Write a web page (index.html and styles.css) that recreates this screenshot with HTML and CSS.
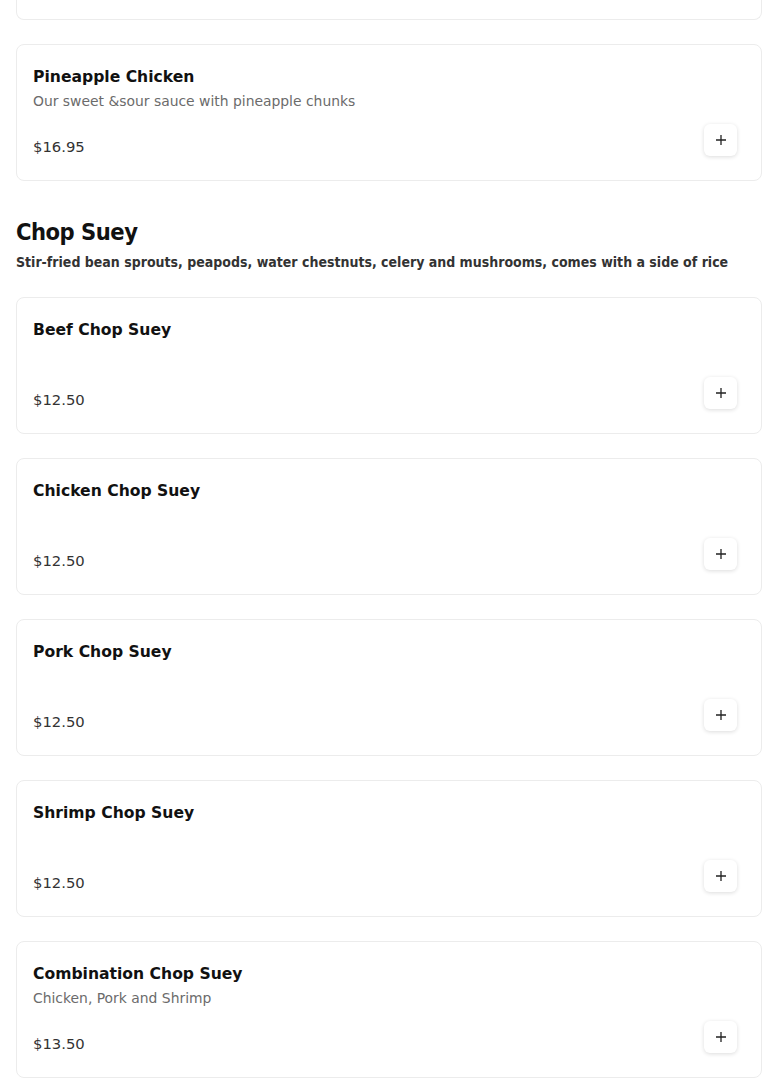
FILE: index.html
```html
<!DOCTYPE html>
<html>
<head>
<meta charset="utf-8">
<link rel="stylesheet" href="styles.css">
</head>
<body>
<main class="menu">
  <div class="card card-partial"></div>

  <div class="card">
    <div class="card-info">
      <h3 class="item-name">Pineapple Chicken</h3>
      <p class="item-desc">Our sweet &amp;sour sauce with pineapple chunks</p>
    </div>
    <div class="card-foot">
      <span class="price">$16.95</span>
      <button class="add-btn" aria-label="Add"><svg width="12" height="12" viewBox="0 0 12 12"><path d="M6 1v10M1 6h10" stroke="#222" stroke-width="1.3" fill="none"/></svg></button>
    </div>
  </div>

  <section class="section">
    <h2 class="section-title">Chop Suey</h2>
    <p class="section-sub">Stir-fried bean sprouts, peapods, water chestnuts, celery and mushrooms, comes with a side of rice</p>
  </section>

  <div class="card">
    <div class="card-info">
      <h3 class="item-name">Beef Chop Suey</h3>
    </div>
    <div class="card-foot">
      <span class="price">$12.50</span>
      <button class="add-btn" aria-label="Add"><svg width="12" height="12" viewBox="0 0 12 12"><path d="M6 1v10M1 6h10" stroke="#222" stroke-width="1.3" fill="none"/></svg></button>
    </div>
  </div>

  <div class="card">
    <div class="card-info">
      <h3 class="item-name">Chicken Chop Suey</h3>
    </div>
    <div class="card-foot">
      <span class="price">$12.50</span>
      <button class="add-btn" aria-label="Add"><svg width="12" height="12" viewBox="0 0 12 12"><path d="M6 1v10M1 6h10" stroke="#222" stroke-width="1.3" fill="none"/></svg></button>
    </div>
  </div>

  <div class="card">
    <div class="card-info">
      <h3 class="item-name">Pork Chop Suey</h3>
    </div>
    <div class="card-foot">
      <span class="price">$12.50</span>
      <button class="add-btn" aria-label="Add"><svg width="12" height="12" viewBox="0 0 12 12"><path d="M6 1v10M1 6h10" stroke="#222" stroke-width="1.3" fill="none"/></svg></button>
    </div>
  </div>

  <div class="card">
    <div class="card-info">
      <h3 class="item-name">Shrimp Chop Suey</h3>
    </div>
    <div class="card-foot">
      <span class="price">$12.50</span>
      <button class="add-btn" aria-label="Add"><svg width="12" height="12" viewBox="0 0 12 12"><path d="M6 1v10M1 6h10" stroke="#222" stroke-width="1.3" fill="none"/></svg></button>
    </div>
  </div>

  <div class="card">
    <div class="card-info">
      <h3 class="item-name">Combination Chop Suey</h3>
      <p class="item-desc">Chicken, Pork and Shrimp</p>
    </div>
    <div class="card-foot">
      <span class="price">$13.50</span>
      <button class="add-btn" aria-label="Add"><svg width="12" height="12" viewBox="0 0 12 12"><path d="M6 1v10M1 6h10" stroke="#222" stroke-width="1.3" fill="none"/></svg></button>
    </div>
  </div>
</main>
</body>
</html>
```
FILE: styles.css
```css
* { box-sizing: border-box; }
html, body { margin: 0; padding: 0; background: #fff; }
body {
  font-family: "DejaVu Sans", "Noto Sans", sans-serif;
  color: #1a1a1a;
  overflow: hidden;
}
.menu {
  display: flex;
  flex-direction: column;
  gap: 24px;
  padding: 0 16px;
}
.card {
  height: 137px;
  border: 1px solid #ececec;
  border-radius: 8px;
  background: #fff;
  padding: 20px 24px 24px 16px;
  display: flex;
  flex-direction: column;
  justify-content: space-between;
}
.card-partial {
  height: 20px;
  border-top: none;
  border-top-left-radius: 0;
  border-top-right-radius: 0;
  padding: 0;
}
.card-info { display: flex; flex-direction: column; gap: 2px; }
.item-name {
  margin: 0;
  font-size: 15.6px;
  line-height: 24px;
  font-weight: 700;
  color: #111;
}
.item-desc {
  margin: 0;
  font-size: 13.9px;
  line-height: 20px;
  color: #6b6b6b;
}
.card-foot {
  display: flex;
  justify-content: space-between;
  align-items: flex-end;
}
.price {
  font-size: 14.8px;
  line-height: 20px;
  color: #333;
  margin-bottom: -1px;
}
.add-btn {
  width: 33px;
  height: 32px;
  border: none;
  border-radius: 6px;
  background: #fff;
  box-shadow: 0 1px 4px rgba(0,0,0,0.14);
  display: flex;
  align-items: center;
  justify-content: center;
  padding: 0;
}
.section { padding-top: 12px; padding-bottom: 2px; }
.section-title {
  margin: 0;
  font-family: "DejaVu Sans Condensed", "DejaVu Sans", sans-serif;
  font-size: 23.5px;
  line-height: 30px;
  font-weight: 700;
  color: #111;
  letter-spacing: -0.5px;
}
.section-sub {
  margin: 6px 0 0;
  font-family: "DejaVu Sans Condensed", "DejaVu Sans", sans-serif;
  font-size: 14px;
  line-height: 18px;
  font-weight: 700;
  color: #333;
}
```
